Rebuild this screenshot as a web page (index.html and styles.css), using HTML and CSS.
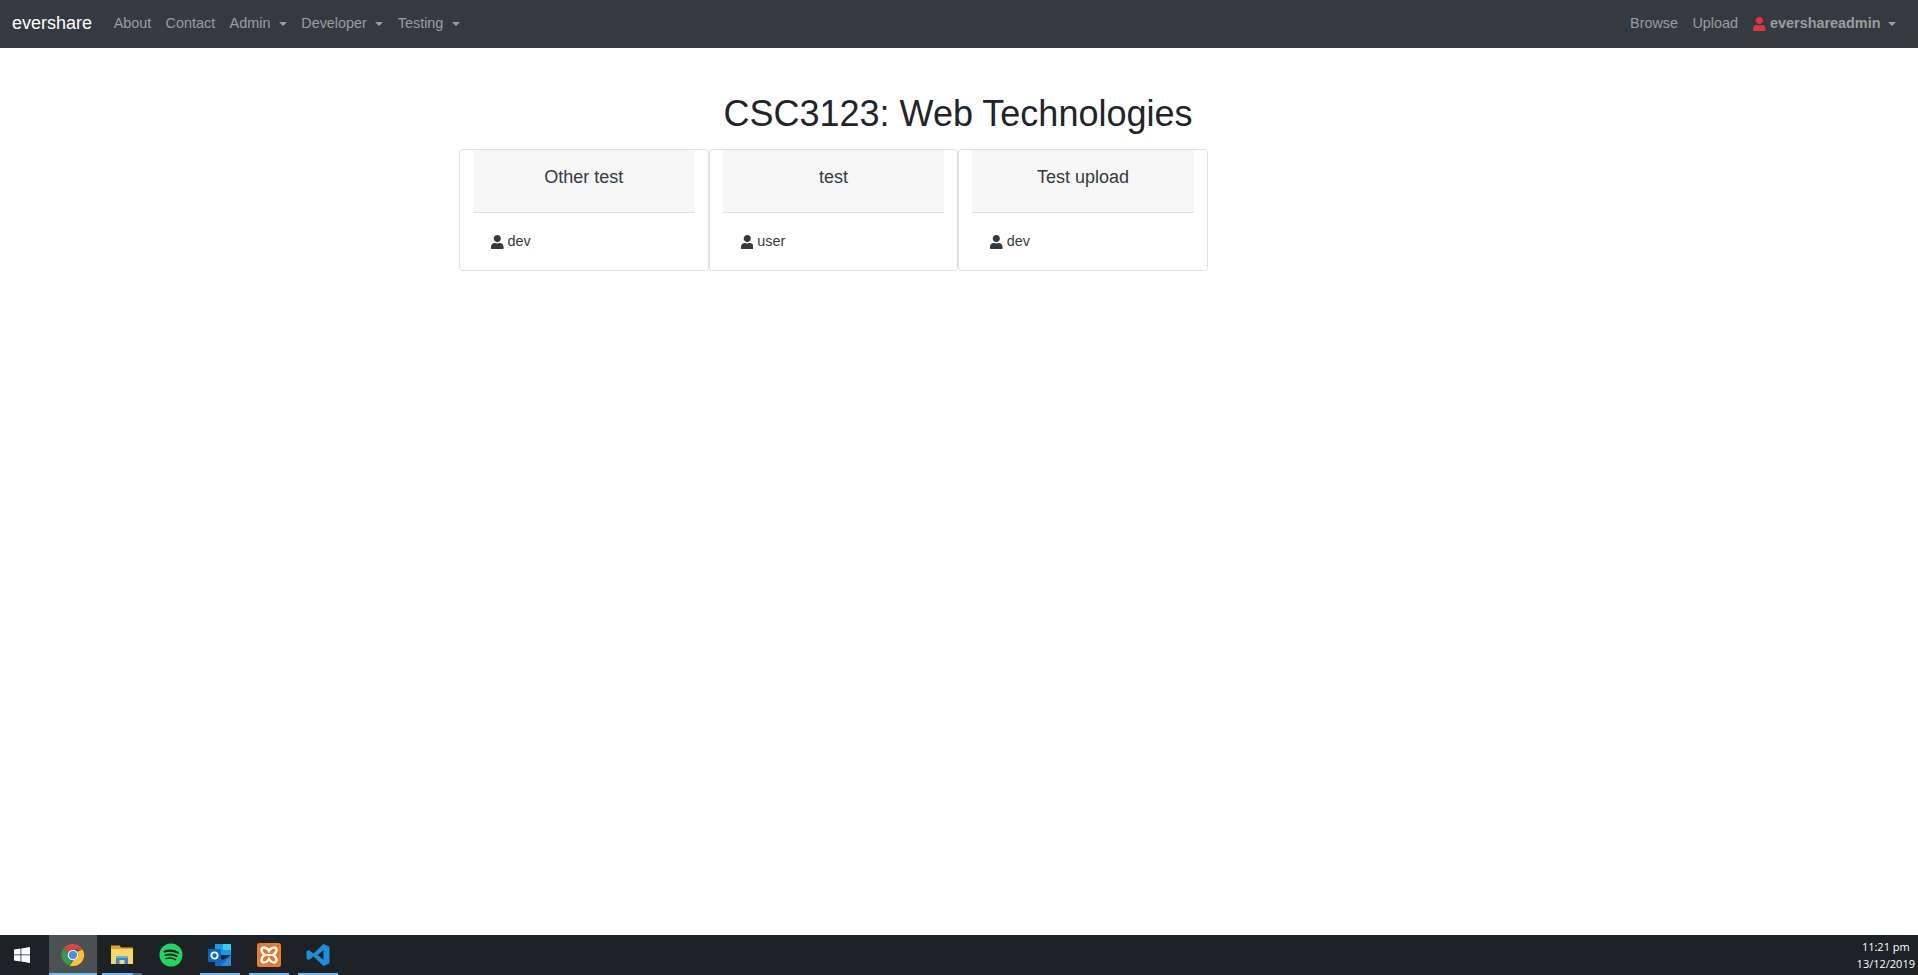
FILE: index.html
```html
<!DOCTYPE html>
<html lang="en">
<head>
<meta charset="utf-8">
<title>evershare</title>
<link rel="stylesheet" href="styles.css">
</head>
<body>
<div class="page">
  <nav class="navbar">
    <a class="brand">evershare</a>
    <ul class="nav-list">
      <li class="nav-link">About</li>
      <li class="nav-link">Contact</li>
      <li class="nav-link caret">Admin</li>
      <li class="nav-link caret">Developer</li>
      <li class="nav-link caret">Testing</li>
    </ul>
    <ul class="nav-list nav-right">
      <li class="nav-link">Browse</li>
      <li class="nav-link">Upload</li>
      <li class="nav-link caret user-link">
        <svg class="icon-user red" viewBox="0 0 448 512"><path d="M224 256c70.700 0 128-57.300 128-128S294.700 0 224 0 96 57.300 96 128s57.300 128 128 128zm89.600 32h-16.700c-22.200 10.200-46.900 16-72.900 16s-50.600-5.800-72.900-16h-16.700C60.200 288 0 348.200 0 422.400V464c0 26.500 21.500 48 48 48h352c26.500 0 48-21.500 48-48v-41.600c0-74.200-60.200-134.400-134.400-134.400z"/></svg>
        <b>evershareadmin</b>
      </li>
    </ul>
  </nav>
  <main class="content">
    <h1 class="title">CSC3123: Web Technologies</h1>
    <div class="cards">
      <div class="card">
        <div class="card-header">Other test</div>
        <div class="card-body">
          <svg class="icon-user" viewBox="0 0 448 512"><path d="M224 256c70.700 0 128-57.300 128-128S294.700 0 224 0 96 57.300 96 128s57.300 128 128 128zm89.600 32h-16.700c-22.200 10.200-46.900 16-72.900 16s-50.600-5.800-72.900-16h-16.700C60.200 288 0 348.200 0 422.400V464c0 26.500 21.500 48 48 48h352c26.500 0 48-21.500 48-48v-41.600c0-74.200-60.200-134.400-134.400-134.400z"/></svg>
          <span>dev</span>
        </div>
      </div>
      <div class="card">
        <div class="card-header">test</div>
        <div class="card-body">
          <svg class="icon-user" viewBox="0 0 448 512"><path d="M224 256c70.700 0 128-57.300 128-128S294.700 0 224 0 96 57.300 96 128s57.300 128 128 128zm89.600 32h-16.700c-22.200 10.200-46.900 16-72.900 16s-50.600-5.800-72.900-16h-16.700C60.200 288 0 348.200 0 422.400V464c0 26.500 21.500 48 48 48h352c26.500 0 48-21.500 48-48v-41.600c0-74.200-60.200-134.400-134.400-134.400z"/></svg>
          <span>user</span>
        </div>
      </div>
      <div class="card">
        <div class="card-header">Test upload</div>
        <div class="card-body">
          <svg class="icon-user" viewBox="0 0 448 512"><path d="M224 256c70.700 0 128-57.300 128-128S294.700 0 224 0 96 57.300 96 128s57.300 128 128 128zm89.600 32h-16.700c-22.200 10.200-46.900 16-72.900 16s-50.600-5.800-72.900-16h-16.700C60.200 288 0 348.200 0 422.400V464c0 26.500 21.500 48 48 48h352c26.500 0 48-21.500 48-48v-41.600c0-74.200-60.200-134.400-134.400-134.400z"/></svg>
          <span>dev</span>
        </div>
      </div>
    </div>
  </main>
  <footer class="taskbar">
    <div class="task start">
      <svg class="win" viewBox="0 0 16 16"><path d="M0 2.400 6.500 1.500V7.500H0zM7.300 1.400 16 0V7.500H7.300zM0 8.300H6.500V14.500L0 13.600zM7.300 8.300H16V16L7.300 14.600z" fill="#fff"/></svg>
    </div>
    <div class="task active">
      <svg class="app" viewBox="0 0 24 24">
        <path d="M12 1a11 11 0 0 1 9.600 5.500H12a5.500 5.500 0 0 0-5.200 3.800L3 4.800A11 11 0 0 1 12 1z" fill="#d9483b"/>
        <path d="M3 4.800l4.200 7.300a5 5 0 0 0 4 5.400l-2.600 5A11 11 0 0 1 3 4.800z" fill="#2f9e48"/>
        <path d="M21.600 6.500A11 11 0 0 1 11 23l-2.400.3 3.600-5.900a5.500 5.500 0 0 0 4.400-8.300l-.3-.6z" fill="#fbc42d"/>
        <circle cx="12" cy="12" r="5.300" fill="#fff"/><circle cx="12" cy="12" r="4.200" fill="#4a8fe8"/>
      </svg>
    </div>
    <div class="task running split">
      <svg class="app" viewBox="0 0 24 24">
        <path d="M1 2.500h8.500l1.500 2H23V8H1z" fill="#e0a526"/>
        <path d="M1 6h22v15H1z" fill="#fcd667"/>
        <path d="M6 13h12v8h-3.500v-4h-5v4H6z" fill="#3a85cf"/>
        <path d="M6 13h12v2H6z" fill="#5fb2ea"/>
      </svg>
    </div>
    <div class="task">
      <svg class="app" viewBox="0 0 24 24">
        <circle cx="12" cy="12" r="11.500" fill="#1ed760"/>
        <g fill="none" stroke="#1c2024" stroke-linecap="round"><path d="M5.500 8.500c4.500-1.300 9.500-1 13.500 1.200" stroke-width="2.200"/><path d="M6.300 12.200c3.800-1.100 8.200-.8 11.500 1.100" stroke-width="1.800"/><path d="M7 15.600c3.200-.9 6.700-.6 9.500 1" stroke-width="1.500"/></g>
      </svg>
    </div>
    <div class="task running">
      <svg class="app" viewBox="0 0 24 24">
        <path d="M7 1h15a1 1 0 0 1 1 1v10H7z" fill="#1b9ae6"/>
        <path d="M15 1h7a1 1 0 0 1 1 1v5h-8z" fill="#3ccbf4"/>
        <path d="M7 12l8 5 8-5v10a1 1 0 0 1-1 1H8a1 1 0 0 1-1-1z" fill="#1569bf"/>
        <path d="M23 12v10a1 1 0 0 1-1 1h-9z" fill="#2a8ae0"/>
        <rect x="0" y="6" width="13" height="13" rx="1" fill="#0a67c0"/>
        <circle cx="6.500" cy="12.500" r="3.100" fill="none" stroke="#fff" stroke-width="1.800"/>
      </svg>
    </div>
    <div class="task running">
      <svg class="app" viewBox="0 0 24 24">
        <rect width="24" height="24" rx="2.500" fill="#e3742a"/>
        <rect x="1" y="1" width="22" height="22" rx="2" fill="none" stroke="#f08a3c" stroke-width="1"/>
        <path d="M12 8Q10 4.500 7 4.500Q4.500 4.500 4.500 7Q4.500 10 8 12Q4.500 14 4.500 17Q4.500 19.500 7 19.500Q10 19.500 12 16Q14 19.500 17 19.500Q19.500 19.500 19.500 17Q19.500 14 16 12Q19.500 10 19.500 7Q19.500 4.500 17 4.500Q14 4.500 12 8Z" fill="none" stroke="#fff" stroke-width="2.400"/>
        <path d="M8 12H16" stroke="#fff" stroke-width="2.200"/>
      </svg>
    </div>
    <div class="task running">
      <svg class="app" viewBox="0 0 24 24">
        <path d="M17.500 1 23.500 3.800V20.200L17.500 23 7.500 13.600 3 17 .5 15.800V8.200L3 7l4.500 3.400zM17.500 7.200l-6 4.800 6 4.800z" fill="#1b8fdc"/>
      </svg>
    </div>
    <div class="clock">
      <span>11:21 pm</span>
      <span>13/12/2019</span>
    </div>
  </footer>
</div>
</body>
</html>
```

FILE: styles.css
```css
* { box-sizing: border-box; }
html, body { margin: 0; height: 100%; }
body {
  font-family: "Liberation Sans", Arial, sans-serif;
  font-size: 14.400px;
  line-height: 21.600px;
  color: #212529;
  background: #fff;
}
.page { display: flex; flex-direction: column; height: 975px; overflow: hidden; }

.navbar {
  display: flex;
  align-items: center;
  height: 48px;
  padding: 0 14.400px 0 12px;
  background: #343a40;
  flex: none;
}
.brand { color: #fff; font-size: 18px; margin-right: 14.400px; }
.nav-list { display: flex; list-style: none; margin: 0; padding: 0; }
.nav-right { margin-left: auto; }
.nav-link { color: rgba(255, 255, 255, .5); padding: 0 7.200px; display: flex; align-items: center; }
.caret::after {
  content: "";
  margin-left: 8.500px;
  border-top: 4.320px solid;
  border-left: 4.320px solid transparent;
  border-right: 4.320px solid transparent;
}
.user-link { padding-left: 8.200px; }
.user-link::after { margin-left: 8px; }

.icon-user { width: 12.600px; height: 14.400px; fill: #343a40; flex: none; margin-right: 4px; }
.icon-user.red { fill: #dc3545; }

.content { flex: 1; }
.title {
  margin: 0;
  padding: 43px 2px 0 0;
  height: 101px;
  font-size: 36px;
  line-height: 46px;
  font-weight: 400;
  text-align: center;
}
.cards { display: flex; width: 1000px; margin: 0 auto; }
.card {
  width: 249.600px;
  height: 122px;
  border: 1px solid #dfdfdf;
  border-radius: 3.600px;
  padding: 0 13px;
}
.card-header {
  height: 63px;
  padding-top: 17px;
  background: #f7f7f7;
  border-bottom: 1px solid #dfdfdf;
  color: #343a40;
  font-size: 18px;
  text-align: center;
}
.card-body {
  display: flex;
  align-items: center;
  padding: 18px 18px;
  color: #343a40;
}

.taskbar {
  display: flex;
  gap: 1px;
  height: 40px;
  flex: none;
  background: #1e2226;
}
.task {
  width: 48px;
  height: 40px;
  display: flex;
  align-items: center;
  justify-content: center;
  flex: none;
}
.start { padding-right: 4px; }
.active {
  background: linear-gradient(#76b9ed, #76b9ed) left bottom / 100% 2px no-repeat, #4d5154;
}
.running { background: linear-gradient(#76b9ed, #76b9ed) center bottom / 40px 2px no-repeat; }
.split {
  background: linear-gradient(to right, #76b9ed 31px, #41708f 31px) center bottom / 40px 2px no-repeat;
}
.app { width: 24px; height: 24px; }
.win { width: 16px; height: 16px; }
.clock {
  margin-left: auto;
  display: flex;
  flex-direction: column;
  align-items: center;
  justify-content: center;
  padding-right: 3px;
  color: #fff;
  font-family: "Open Sans", sans-serif;
  font-size: 11px;
  line-height: 17px;
}
```
